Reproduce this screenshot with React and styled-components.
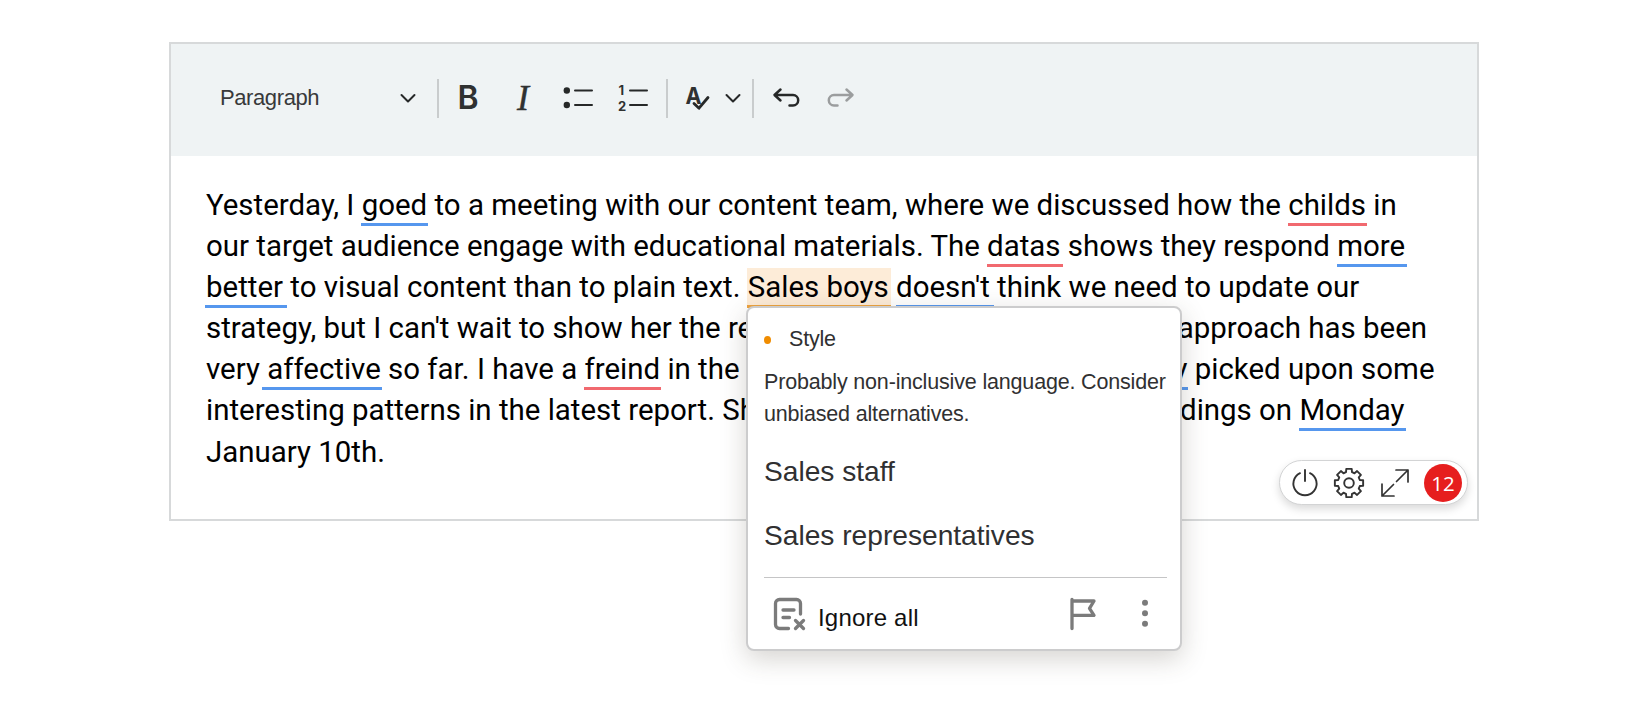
import React from 'react';
import styled, { createGlobalStyle } from 'styled-components';

const GlobalStyle = createGlobalStyle`
  * {
    box-sizing: border-box;
  }
  body {
    margin: 0;
    background-color: #ffffff;
    font-family: 'Liberation Sans', Arial, sans-serif;
  }
`;

const underlines = {
  grammar: '#5697ee',
  spelling: '#f1696f',
  style: '#eda33f',
};

const Page = styled.main`
  width: 1650px;
  height: 707px;
  padding: 42px 0 0 169px;
  overflow: hidden;
`;

const Editor = styled.section`
  position: relative;
  width: 1310px;
  height: 479px;
  border: 2px solid #d7d9da;
`;

const Toolbar = styled.div`
  display: flex;
  align-items: center;
  height: 112px;
  padding: 0 0 4px 49px;
  background-color: #eff3f4;
  color: #2f3131;
`;

const Icon = styled.svg`
  display: block;
  flex: none;
  margin-left: ${({ $gap }) => $gap || 0}px;
  overflow: visible;
  fill: none;
  stroke: ${({ $color }) => $color || '#262828'};
  stroke-width: ${({ $weight }) => $weight || 2}px;
  stroke-linecap: round;
  stroke-linejoin: round;
  text {
    font-family: Inter, sans-serif;
    font-weight: 700;
    fill: #2f3131;
    stroke: none;
  }
`;

const BlockPicker = styled.button`
  display: flex;
  align-items: center;
  justify-content: space-between;
  width: 196px;
  padding: 0;
  border: none;
  background: none;
  color: #38393a;
  font-family: inherit;
  font-size: 22px;
  line-height: 26px;
  letter-spacing: -0.4px;
`;

const Divider = styled.div`
  width: 2px;
  height: 39px;
  margin-left: ${({ $gap }) => $gap}px;
  background-color: #c9cccd;
`;

const LetterButton = styled.button`
  width: ${({ $width }) => $width}px;
  margin-left: ${({ $gap }) => $gap}px;
  padding: 0;
  border: none;
  background: none;
  color: #2f3131;
  font-size: ${({ $size }) => $size}px;
  line-height: 38px;
  text-align: center;
  font-family: Inter, sans-serif;
  font-weight: 600;
`;

const ItalicButton = styled(LetterButton)`
  font-family: 'Liberation Serif', 'Times New Roman', serif;
  font-style: italic;
  font-weight: 400;
  -webkit-text-stroke: 0.4px #2f3131;
`;

const Content = styled.div`
  padding: 29px 0 0 35px;
  color: #000000;
  font-family: Roboto, sans-serif;
  font-size: 29.44px;
`;

const Line = styled.div`
  display: flex;
  justify-content: space-between;
  width: ${({ $width }) => ($width ? `${$width}px` : 'max-content')};
  height: 41.1px;
  line-height: 41.1px;
  white-space: pre;
`;

const Mark = styled.span`
  margin: 0 -${({ $trail = 1 }) => $trail}px 0 -${({ $lead = 0.3 }) => $lead}px;
  padding: 2px ${({ $trail = 1 }) => $trail}px 1px ${({ $lead = 0.3 }) => $lead}px;
  border-bottom: 3px solid ${({ $kind }) => underlines[$kind]};
  background-color: ${({ $kind }) => ($kind === 'style' ? '#fdecd8' : 'transparent')};
`;

const StatusPill = styled.div`
  position: absolute;
  right: 9px;
  bottom: 14px;
  display: flex;
  align-items: center;
  width: 189px;
  height: 45px;
  padding-left: 12px;
  border: 1px solid #d3d4d5;
  border-radius: 23px;
  background-color: #ffffff;
  box-shadow: 0 4px 9px rgba(0, 0, 0, 0.15);
`;

const Count = styled.span`
  width: 38px;
  height: 38px;
  margin-left: 15px;
  border-radius: 50%;
  background-color: #e61e1e;
  color: #ffffff;
  font-family: 'Open Sans', sans-serif;
  font-size: 20.5px;
  line-height: 38px;
  text-align: center;
`;

const Popup = styled.aside`
  position: absolute;
  left: 575px;
  top: 262px;
  width: 436px;
  height: 345px;
  padding: 18px 13px 0 16px;
  border: 2px solid #cccccd;
  border-radius: 8px;
  background-color: #ffffff;
  color: #303031;
  box-shadow: 0 8px 26px rgba(70, 60, 45, 0.22);
`;

const Category = styled.div`
  display: flex;
  align-items: center;
  gap: 18px;
  height: 27px;
  font-size: 21.5px;
  line-height: 27px;
  letter-spacing: -0.2px;
`;

const Dot = styled.i`
  width: 7px;
  height: 8px;
  border-radius: 50%;
  background-color: #f08c00;
`;

const Explanation = styled.p`
  margin: 13px 0 0;
  font-size: 21.5px;
  line-height: 32px;
  letter-spacing: -0.17px;
  white-space: nowrap;
`;

const Suggestion = styled.div`
  height: 64px;
  font-size: 28.15px;
  line-height: 32px;
`;

const Suggestions = styled.div`
  padding-top: 26px;
`;

const PopupFooter = styled.footer`
  display: flex;
  align-items: center;
  height: 72px;
  margin-top: -7px;
  border-top: 1.5px solid #c5c5c6;
  color: #111111;
  font-size: 24px;
`;

const IgnoreLabel = styled.span`
  width: 252px;
  margin-left: 13px;
  padding-top: 8px;
  letter-spacing: 0.2px;
`;

const Chevron = ({ gap }) => (
  <Icon width='16' height='10' viewBox='0 0 16 10' $gap={gap}>
    <path d='M1.5 2 8 8.5 14.5 2' />
  </Icon>
);

// Outline of an eight toothed cog, centred on 0,0
const cogPath = () => {
  const points = [];
  for (let tooth = 0; tooth < 8; tooth += 1) {
    const middle = (tooth * Math.PI) / 4;
    [
      [-0.27, 11.2],
      [-0.19, 14.4],
      [0.19, 14.4],
      [0.27, 11.2],
    ].forEach(([offset, radius]) => {
      const x = Math.sin(middle + offset) * radius;
      const y = -Math.cos(middle + offset) * radius;
      points.push(`${x.toFixed(2)} ${y.toFixed(2)}`);
    });
  }
  return `M${points.join('L')}Z`;
};

const EditorToolbar = () => (
  <Toolbar>
    <BlockPicker>
      Paragraph
      <Chevron />
    </BlockPicker>
    <Divider $gap={21} />
    <LetterButton $gap={17} $width={24} $size={32}>
      B
    </LetterButton>
    <ItalicButton $gap={33} $width={20} $size={36}>
      I
    </ItalicButton>
    <Icon width='30' height='24' viewBox='0 0 30 24' $gap={30}>
      <circle cx='3.8' cy='4.5' r='3.2' fill='#262828' stroke='none' />
      <circle cx='3.8' cy='19' r='3.2' fill='#262828' stroke='none' />
      <path d='M12 4.5h17M12 19h17' />
    </Icon>
    <Icon width='30' height='28' viewBox='0 0 30 28' $gap={25}>
      <text x='0.5' y='11' fontSize='13'>1</text>
      <text x='0' y='26.5' fontSize='13'>2</text>
      <path d='M12 6.5h17M12 21h17' />
    </Icon>
    <Divider $gap={18} />
    <Icon width='23' height='26' viewBox='0 0 23 26' $gap={18} $weight={2.8}>
      <text x='-0.5' y='18.5' fontSize='23.5' textLength='16' lengthAdjust='spacingAndGlyphs'>A</text>
      <path d='M8 18.5l5 4.7L22 12.5' />
    </Icon>
    <Chevron gap={16} />
    <Divider $gap={11} />
    <Icon width='27' height='20' viewBox='0 0 27 20' $gap={18.5} $weight={2.5}>
      <path d='M7.5 1.5 1.5 7l6 5.5M2 7h18a5.2 5.2 0 0 1 0 10.4h-3.5' />
    </Icon>
    <Icon width='27' height='20' viewBox='0 0 27 20' $gap={27.5} $weight={2.5} $color='#9b9d9e'>
      <path d='M19.5 1.5l6 5.5-6 5.5M25 7H7a5.2 5.2 0 0 0 0 10.4h3.5' />
    </Icon>
  </Toolbar>
);

const EditorContent = () => (
  <Content>
    <Line>
      <span>
        Yesterday, I <Mark $kind='grammar'>goed</Mark> to a meeting with our content team, where we
        {' discussed how the '}
        <Mark $kind='spelling'>childs</Mark> in
      </span>
    </Line>
    <Line>
      <span>
        our target audience engage with educational materials. The{' '}
        <Mark $kind='spelling' $trail={2}>datas</Mark> shows they respond{' '}
        <Mark $kind='grammar' $trail={2}>more</Mark>
      </span>
    </Line>
    <Line>
      <span>
        <Mark $kind='grammar' $lead={1.5} $trail={4}>better</Mark> to visual content than to plain
        {' text. '}
        <Mark $kind='style' $trail={2}>Sales boys</Mark>{' '}
        <Mark $kind='grammar' $trail={4}>doesn't</Mark> think we need to update our
      </span>
    </Line>
    <Line $width={1221}>
      <span>strategy, but I can't wait to show her the re</span>
      <span>approach has been</span>
    </Line>
    <Line $width={1228.5}>
      <span>
        very <Mark $kind='grammar' $lead={5}>affective</Mark> so far. I have a{' '}
        <Mark $kind='spelling'>freind</Mark> in the
      </span>
      <span>
        <Mark $kind='grammar'>y</Mark> picked upon some
      </span>
    </Line>
    <Line $width={1198.5}>
      <span>interesting patterns in the latest report. Sh</span>
      <span>
        dings on <Mark $kind='grammar'>Monday</Mark>
      </span>
    </Line>
    <Line>January 10th.</Line>
  </Content>
);

const EditorStatus = () => (
  <StatusPill>
    <Icon width='26' height='28' viewBox='0 0 26 28' $color='#333333' $weight={1.9}>
      <path d='M13 1v11M8 4.2a11.6 11.6 0 1 0 10 0' />
    </Icon>
    <Icon width='30' height='30' viewBox='-15 -15 30 30' $gap={16} $color='#333333' $weight={1.9}>
      <path d={cogPath()} />
      <circle r='4.8' />
    </Icon>
    <Icon width='28' height='28' viewBox='0 0 28 28' $gap={17} $color='#333333' $weight={1.7}>
      <path d='M15 1h12v12M27 1 15.5 12.5M13 27H1V15M1 27l11.5-11.5' />
    </Icon>
    <Count>12</Count>
  </StatusPill>
);

const SuggestionPopup = () => (
  <Popup>
    <Category>
      <Dot />
      Style
    </Category>
    <Explanation>
      Probably non-inclusive language. Consider
      <br />
      unbiased alternatives.
    </Explanation>
    <Suggestions>
      <Suggestion>Sales staff</Suggestion>
      <Suggestion>Sales representatives</Suggestion>
    </Suggestions>
    <PopupFooter>
      <Icon width='31' height='32' viewBox='0 0 31 32' $gap={10} $color='#7b7b7b' $weight={3.3}>
        <path d='M26.5 16V5.5a4 4 0 0 0-4-4h-17a4 4 0 0 0-4 4v21a4 4 0 0 0 4 4h9' />
        <path d='M9 12h11M9 19.5h6.5M21.5 22.5l8 8M29.5 22.5l-8 8' />
      </Icon>
      <IgnoreLabel>Ignore all</IgnoreLabel>
      <Icon width='26' height='32' viewBox='0 0 26 32' $color='#7b7b7b' $weight={3.3}>
        <path d='M2 1.5v29M2 3h22l-4.5 7.3 4.5 7H2' />
      </Icon>
      <Icon width='6' height='28' viewBox='0 0 6 28' $gap={46}>
        <g fill='#7b7b7b' stroke='none'>
          <circle cx='3' cy='2.7' r='3' />
          <circle cx='3' cy='13.2' r='3' />
          <circle cx='3' cy='23.7' r='3' />
        </g>
      </Icon>
    </PopupFooter>
  </Popup>
);

const App = () => (
  <>
    <GlobalStyle />
    <Page>
      <Editor>
        <EditorToolbar />
        <EditorContent />
        <EditorStatus />
        <SuggestionPopup />
      </Editor>
    </Page>
  </>
);

export default App;
